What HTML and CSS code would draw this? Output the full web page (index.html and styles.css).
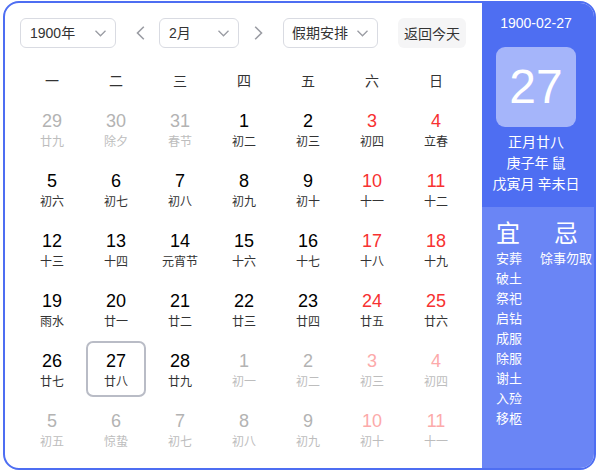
FILE: index.html
```html
<!DOCTYPE html>
<html lang="zh">
<head>
<meta charset="utf-8">
<link rel="stylesheet" href="styles.css">
</head>
<body>
<div class="cal">
  <div class="main">
    <div class="toolbar">
      <div class="select sel-year"><span>1900年</span><svg class="chev" width="11" height="7" viewBox="0 0 11 7"><polyline points="0.5,0.8 5.5,5.8 10.5,0.8" fill="none" stroke="#9a9ca3" stroke-width="1.3"/></svg></div>
      <div class="arrow arrow-l"><svg width="9" height="14" viewBox="0 0 9 14"><polyline points="7.8,0.8 1.5,7 7.8,13.2" fill="none" stroke="#9a9ca3" stroke-width="1.6"/></svg></div>
      <div class="select sel-month"><span>2月</span><svg class="chev" width="11" height="7" viewBox="0 0 11 7"><polyline points="0.5,0.8 5.5,5.8 10.5,0.8" fill="none" stroke="#9a9ca3" stroke-width="1.3"/></svg></div>
      <div class="arrow arrow-r"><svg width="9" height="14" viewBox="0 0 9 14"><polyline points="1.2,0.8 7.5,7 1.2,13.2" fill="none" stroke="#9a9ca3" stroke-width="1.6"/></svg></div>
      <div class="select sel-holiday"><span>假期安排</span><svg class="chev" width="11" height="7" viewBox="0 0 11 7"><polyline points="0.5,0.8 5.5,5.8 10.5,0.8" fill="none" stroke="#9a9ca3" stroke-width="1.3"/></svg></div>
      <div class="today-btn">返回今天</div>
    </div>
    <div class="weekdays">
      <div>一</div><div>二</div><div>三</div><div>四</div><div>五</div><div>六</div><div>日</div>
    </div>
    <div class="grid">
      <div class="cell other"><div class="num">29</div><div class="lunar">廿九</div></div>
      <div class="cell other"><div class="num">30</div><div class="lunar">除夕</div></div>
      <div class="cell other"><div class="num">31</div><div class="lunar">春节</div></div>
      <div class="cell"><div class="num">1</div><div class="lunar">初二</div></div>
      <div class="cell"><div class="num">2</div><div class="lunar">初三</div></div>
      <div class="cell weekend"><div class="num">3</div><div class="lunar">初四</div></div>
      <div class="cell weekend"><div class="num">4</div><div class="lunar">立春</div></div>

      <div class="cell"><div class="num">5</div><div class="lunar">初六</div></div>
      <div class="cell"><div class="num">6</div><div class="lunar">初七</div></div>
      <div class="cell"><div class="num">7</div><div class="lunar">初八</div></div>
      <div class="cell"><div class="num">8</div><div class="lunar">初九</div></div>
      <div class="cell"><div class="num">9</div><div class="lunar">初十</div></div>
      <div class="cell weekend"><div class="num">10</div><div class="lunar">十一</div></div>
      <div class="cell weekend"><div class="num">11</div><div class="lunar">十二</div></div>

      <div class="cell"><div class="num">12</div><div class="lunar">十三</div></div>
      <div class="cell"><div class="num">13</div><div class="lunar">十四</div></div>
      <div class="cell"><div class="num">14</div><div class="lunar">元宵节</div></div>
      <div class="cell"><div class="num">15</div><div class="lunar">十六</div></div>
      <div class="cell"><div class="num">16</div><div class="lunar">十七</div></div>
      <div class="cell weekend"><div class="num">17</div><div class="lunar">十八</div></div>
      <div class="cell weekend"><div class="num">18</div><div class="lunar">十九</div></div>

      <div class="cell"><div class="num">19</div><div class="lunar">雨水</div></div>
      <div class="cell"><div class="num">20</div><div class="lunar">廿一</div></div>
      <div class="cell"><div class="num">21</div><div class="lunar">廿二</div></div>
      <div class="cell"><div class="num">22</div><div class="lunar">廿三</div></div>
      <div class="cell"><div class="num">23</div><div class="lunar">廿四</div></div>
      <div class="cell weekend"><div class="num">24</div><div class="lunar">廿五</div></div>
      <div class="cell weekend"><div class="num">25</div><div class="lunar">廿六</div></div>

      <div class="cell"><div class="num">26</div><div class="lunar">廿七</div></div>
      <div class="cell selected"><div class="num">27</div><div class="lunar">廿八</div></div>
      <div class="cell"><div class="num">28</div><div class="lunar">廿九</div></div>
      <div class="cell other"><div class="num">1</div><div class="lunar">初一</div></div>
      <div class="cell other"><div class="num">2</div><div class="lunar">初二</div></div>
      <div class="cell other weekend"><div class="num">3</div><div class="lunar">初三</div></div>
      <div class="cell other weekend"><div class="num">4</div><div class="lunar">初四</div></div>

      <div class="cell other"><div class="num">5</div><div class="lunar">初五</div></div>
      <div class="cell other"><div class="num">6</div><div class="lunar">惊蛰</div></div>
      <div class="cell other"><div class="num">7</div><div class="lunar">初七</div></div>
      <div class="cell other"><div class="num">8</div><div class="lunar">初八</div></div>
      <div class="cell other"><div class="num">9</div><div class="lunar">初九</div></div>
      <div class="cell other weekend"><div class="num">10</div><div class="lunar">初十</div></div>
      <div class="cell other weekend"><div class="num">11</div><div class="lunar">十一</div></div>
    </div>
  </div>
  <div class="side">
    <div class="side-top">
      <div class="date">1900-02-27</div>
      <div class="big-day">27</div>
      <div class="info">正月廿八</div>
      <div class="info">庚子年 鼠</div>
      <div class="info">戊寅月 辛未日</div>
    </div>
    <div class="side-bottom">
      <div class="col col-yi">
        <div class="head">宜</div>
        <div class="item">安葬</div>
        <div class="item">破土</div>
        <div class="item">祭祀</div>
        <div class="item">启钻</div>
        <div class="item">成服</div>
        <div class="item">除服</div>
        <div class="item">谢土</div>
        <div class="item">入殓</div>
        <div class="item">移柩</div>
      </div>
      <div class="col col-ji">
        <div class="head">忌</div>
        <div class="item">馀事勿取</div>
      </div>
    </div>
  </div>
</div>
</body>
</html>
```

FILE: styles.css
```css
* { box-sizing: border-box; }
html, body { margin: 0; padding: 0; background: #fff; }
body {
  font-family: "Liberation Sans", Arial, "Noto Sans CJK SC", sans-serif;
  color: #333;
}
.cal {
  margin: 1px 0 0 3px;
  width: 593px;
  height: 469px;
  border: 2px solid #4e6ef2;
  border-radius: 16px;
  overflow: hidden;
  display: flex;
}
.main {
  flex: 1;
  padding: 15px 0 0 15px;
}
.toolbar {
  display: flex;
  align-items: center;
  height: 30px;
}
.select {
  height: 30px;
  border: 1px solid #d9dbe2;
  border-radius: 6px;
  display: flex;
  align-items: center;
  justify-content: space-between;
  padding: 0 9px 0 9px;
  font-size: 14px;
  color: #333;
}
.select span { line-height: 20px; }
.chev { display: block; margin-top: 1px; }
.sel-year { width: 96px; }
.sel-month { width: 80px; }
.sel-holiday { width: 95px; padding-left: 8px; }
.arrow { width: 9px; height: 14px; display: flex; }
.arrow svg { display: block; }
.arrow-l { margin: 0 14px 0 20px; }
.arrow-r { margin: 0 20px 0 15px; }
.today-btn {
  margin-left: 20px;
  width: 68px;
  height: 30px;
  border-radius: 6px;
  background: #f5f5f6;
  font-size: 14px;
  color: #333;
  display: flex;
  align-items: center;
  justify-content: center;
}
.weekdays {
  margin-top: 18px;
  display: grid;
  grid-template-columns: repeat(7, 64px);
  height: 28px;
  align-items: center;
  font-family: "Noto Sans CJK SC", sans-serif;
  font-size: 14px;
  color: #333;
  text-align: center;
}
.grid {
  margin-top: 7px;
  display: grid;
  grid-template-columns: repeat(7, 64px);
  grid-auto-rows: 56px;
  row-gap: 4px;
}
.cell {
  margin: 0 2px;
  border: 2px solid transparent;
  border-radius: 7px;
  text-align: center;
  padding-top: 8px;
}
.cell .num {
  font-family: "Liberation Sans", Arial, sans-serif;
  font-size: 18px;
  line-height: 20px;
  color: #000;
}
.cell .lunar {
  font-family: "Noto Sans CJK SC", sans-serif;
  font-size: 12px;
  line-height: 17px;
  color: #333;
  margin-top: 1px;
}
.cell.weekend .num { color: #f73131; }
.cell.other .num { color: #b3b3b3; }
.cell.other .lunar { color: #bdbdbd; }
.cell.other.weekend .num { color: #fcaaaa; }
.cell.selected { border-color: #b9bcc6; }

.side {
  width: 112px;
  display: flex;
  flex-direction: column;
  color: #fff;
}
.side-top {
  background: #4e6ef2;
  height: 204px;
  padding-top: 10px;
  display: flex;
  flex-direction: column;
  align-items: center;
}
.date {
  font-size: 14px;
  line-height: 20px;
  margin-left: -4px;
}
.big-day {
  margin-top: 14px;
  margin-left: -4px;
  width: 80px;
  height: 80px;
  border-radius: 9px;
  background: #a5b5fa;
  font-size: 48px;
  line-height: 80px;
  text-align: center;
  color: #fff;
  margin-bottom: 4px;
}
.info {
  font-family: "Noto Sans CJK SC", sans-serif;
  font-size: 14px;
  line-height: 21px;
  margin-left: -4px;
}
.side-bottom {
  flex: 1;
  background: #6a85f5;
  display: flex;
  padding: 11px 0 0 14px;
  font-family: "Noto Sans CJK SC", sans-serif;
}
.col-yi { width: 42px; }
.col-ji { width: 56px; text-align: center; }
.head {
  font-size: 24px;
  line-height: 28px;
  margin-bottom: 2px;
}
.item {
  font-size: 13px;
  line-height: 20px;
}
```
